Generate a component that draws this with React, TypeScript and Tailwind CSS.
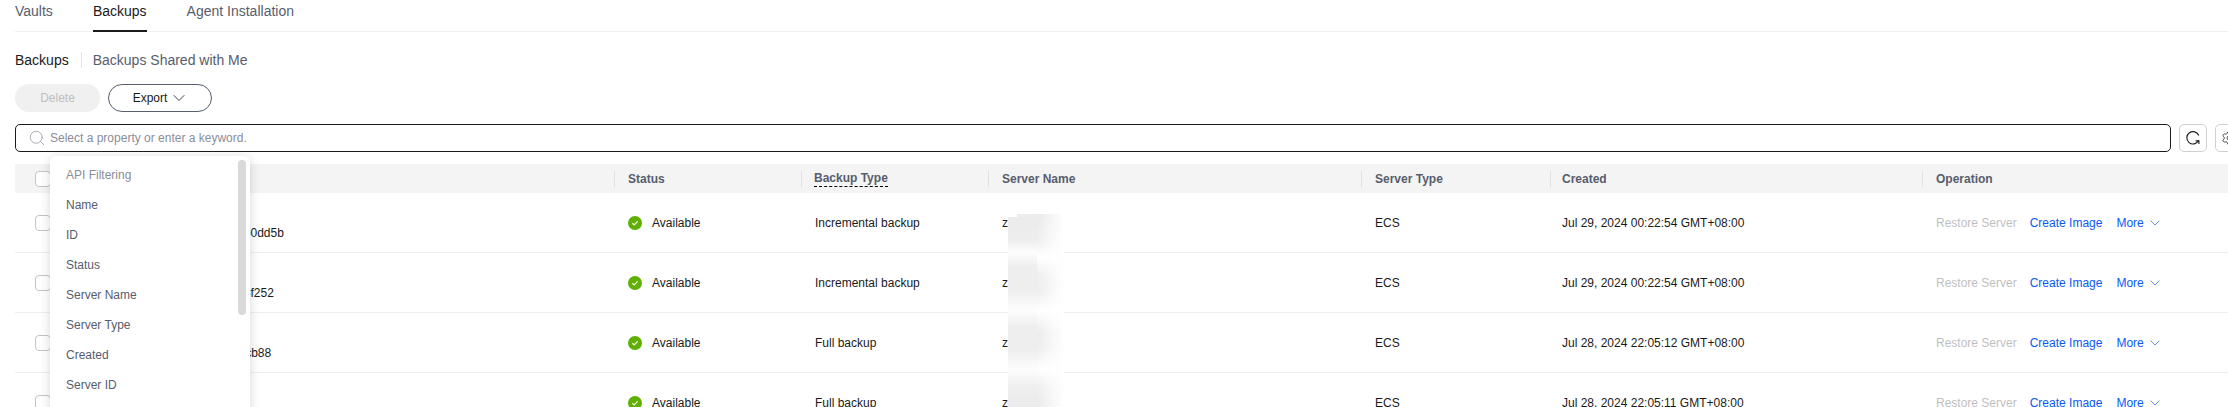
import React from 'react';
import { ChevronDown, Search, Settings } from 'lucide-react';

const columns = 'grid grid-cols-[599px_187px_187px_373px_189px_372px_320px]';

const rows = [
  { id: '4f7a1c2e-93b6-4d05a8e1-6c27e1b0dd5b', type: 'Incremental backup', created: 'Jul 29, 2024 00:22:54 GMT+08:00' },
  { id: '82c6de10-5ab749f3-b1c4-07d93e6f252', type: 'Incremental backup', created: 'Jul 29, 2024 00:22:54 GMT+08:00' },
  { id: 'c19e05b7-2d48-4a6f-97e3-5f18a0cb88', type: 'Full backup', created: 'Jul 28, 2024 22:05:12 GMT+08:00' },
  { id: '6ba3f471-08ce-4e92-a5d6-31c7f9e20a1', type: 'Full backup', created: 'Jul 28, 2024 22:05:11 GMT+08:00' },
];

const filterItems = ['Name', 'ID', 'Status', 'Server Name', 'Server Type', 'Created', 'Server ID', 'Server Tag'];

const Checkbox = () => (
  <span className="block w-4 h-4 rounded-[4px] border border-[#c4c4c4] bg-white" />
);

const HeaderCell = ({ label, dashed, tight }: { label: string; dashed?: boolean; tight?: boolean }) => (
  <div className="flex items-center h-full">
    <span className="w-px h-4 bg-[#dfe1e6]" />
    <span
      className={`${tight ? 'ml-[11px]' : dashed ? 'ml-3' : 'ml-[13px]'} text-xs font-bold text-[#575d6c] ${
        dashed ? 'border-b border-dashed border-black leading-[15px]' : ''
      }`}
    >
      {label}
    </span>
  </div>
);

const StatusIcon = () => (
  <svg width="14" height="14" viewBox="0 0 14 14" className="shrink-0">
    <circle cx="7" cy="7" r="7" fill="#5fb000" />
    <path d="M4.4 7.2 6.2 8.9 9.6 5.4" fill="none" stroke="#fff" strokeWidth="1.2" />
  </svg>
);

const App: React.FC = () => {
  return (
    <div className="relative w-[2228px] h-[407px] overflow-hidden bg-white pl-[15px] font-['Liberation_Sans',Arial,sans-serif] text-sm text-[#1a1a1a]">
      {/* Top tabs */}
      <div className="flex gap-10 h-8 border-b border-[#f0f0f0]">
        <span className="text-[#575d6c] leading-[22px]">Vaults</span>
        <span className="h-8 border-b-[2px] border-[#1a1a1a] leading-[22px]">Backups</span>
        <span className="text-[#575d6c] leading-[22px]">Agent Installation</span>
      </div>

      {/* Sub tabs */}
      <div className="flex items-center h-5 mt-[18px]">
        <span>Backups</span>
        <span className="w-px h-4 bg-[#e6e6e6] ml-3 mr-[11px]" />
        <span className="text-[#575d6c]">Backups Shared with Me</span>
      </div>

      {/* Actions */}
      <div className="flex gap-2 mt-[14px]">
        <button className="w-[85px] h-7 rounded-full bg-[#f0f0f0] text-xs text-[#bfbfbf]">Delete</button>
        <button className="flex items-center justify-center gap-[2px] w-[104px] h-7 pl-[2px] rounded-full border border-[#575d6c] text-xs">
          Export
          <ChevronDown size={20} strokeWidth={1} />
        </button>
      </div>

      {/* Search */}
      <div className="flex gap-2 mt-3">
        <div className="flex items-center shrink-0 w-[2156px] h-7 rounded-[5px] border border-[#1a1a1a] pl-3">
          <Search size={18} strokeWidth={1.2} className="text-[#a0a4ad]" />
          <span className="ml-1 text-xs text-[#8a8e99]">Select a property or enter a keyword.</span>
        </div>
        <button className="flex items-center justify-center shrink-0 w-7 h-7 rounded-[5px] border border-[#d0d0d0]">
          <svg width="16" height="16" viewBox="0 0 16 16" fill="none" stroke="#1a1a1a" strokeWidth="1.1">
            <path d="M13.6 10.6A6.2 6.2 0 1 1 13.8 5.5" />
            <path d="M10.6 10.9h3.3v3" />
          </svg>
        </button>
        <button className="flex items-center justify-center shrink-0 w-7 h-7 rounded-[5px] border border-[#d0d0d0]">
          <Settings size={16} strokeWidth={1.1} />
        </button>
      </div>

      {/* Table */}
      <div className="mt-3 w-[2227px] text-xs">
        <div className={`${columns} h-[29px] bg-[#f4f4f4]`}>
          <div className="flex items-center pl-5">
            <Checkbox />
          </div>
          <HeaderCell label="Status" />
          <HeaderCell label="Backup Type" dashed />
          <HeaderCell label="Server Name" />
          <HeaderCell label="Server Type" />
          <HeaderCell label="Created" tight />
          <HeaderCell label="Operation" />
        </div>

        {rows.map((row) => (
          <div key={row.id} className={`${columns} h-[60px] items-center border-b border-[#eeeeee]`}>
            <div className="flex items-center pl-5">
              <Checkbox />
              <span className="ml-3 mt-5">{row.id}</span>
            </div>
            <div className="flex items-center pl-[14px]">
              <StatusIcon />
              <span className="ml-[10px]">Available</span>
            </div>
            <div className="pl-[14px]">{row.type}</div>
            <div className="pl-[14px]">z</div>
            <div className="pl-[14px]">ECS</div>
            <div className="pl-3">{row.created}</div>
            <div className="flex items-center pl-[14px]">
              <span className="text-[#bfbfbf]">Restore Server</span>
              <span className="ml-[13px] text-[#0a59f7]">Create Image</span>
              <span className="ml-[14px] text-[#0a59f7]">More</span>
              <ChevronDown size={16} strokeWidth={1} className="ml-[3px] text-[#0a59f7]" />
            </div>
          </div>
        ))}
      </div>

      {/* Blurred server names */}
      <div className="absolute left-[1008px] top-[217px] w-[29px] h-[190px] bg-[linear-gradient(to_bottom,#ebebeb_0%,#eeeeee_12%,#fdfdfd_19%,#eeeeee_26%,#eeeeee_38%,#fdfdfd_49%,#eeeeee_58%,#eeeeee_70%,#fdfdfd_80%,#eeeeee_90%,#ebebeb_100%)]" />
      <div className="absolute left-[1017px] top-[214px] w-[20px] h-[3px] bg-[#ededed]" />
      <div className="absolute left-[1037px] top-[214px] w-[27px] h-[193px] bg-[linear-gradient(to_right,#ffffff00_0%,#ffffff_100%),linear-gradient(to_bottom,#e9e9e9_0%,#f0f0f0_14%,#ffffff_22%,#eeeeee_32%,#eeeeee_40%,#ffffff_50%,#ebebeb_62%,#eeeeee_70%,#ffffff_80%,#eeeeee_90%,#eaeaea_100%)]" />

      {/* Filter dropdown */}
      <div className="absolute left-[50px] top-[156px] w-[200px] h-[270px] rounded-md bg-white shadow-[0_2px_12px_rgba(0,0,0,0.16)] pl-4 pt-[4px]">
        <div className="flex items-center h-[30px] text-xs text-[#8a8e99]">API Filtering</div>
        {filterItems.map((item) => (
          <div key={item} className="flex items-center h-[30px] text-xs text-[#575d6c]">
            {item}
          </div>
        ))}
        <div className="absolute right-1 top-1 w-2 h-[155px] rounded-full bg-[#d9d9d9]" />
      </div>
    </div>
  );
};

export default App;
